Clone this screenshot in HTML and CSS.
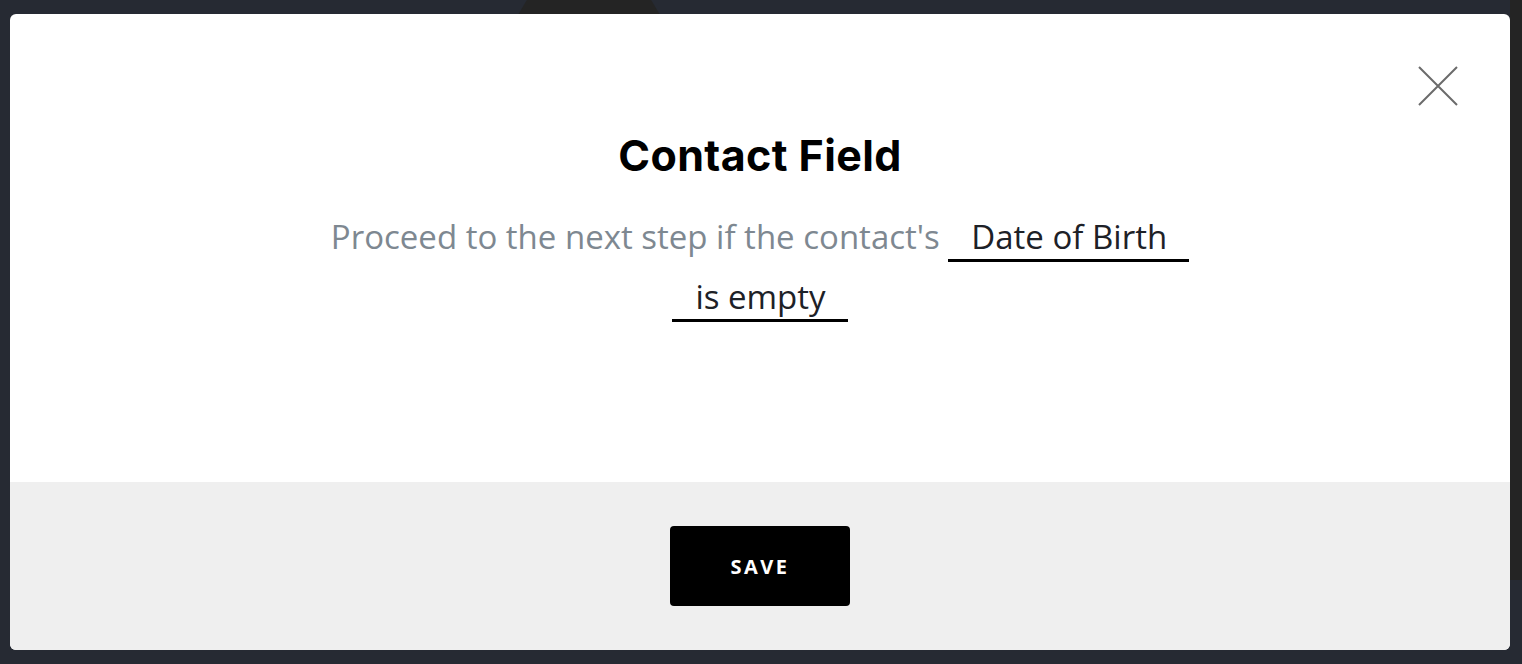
FILE: index.html
```html
<!DOCTYPE html>
<html lang="en">
<head>
<meta charset="utf-8">
<title>Contact Field</title>
<link rel="stylesheet" href="styles.css">
</head>
<body>
<div class="backdrop-shape shape-top"></div>
<div class="backdrop-shape shape-right"></div>
<div class="modal">
  <div class="modal-body">
    <button class="close" aria-label="Close">
      <svg width="40" height="40" viewBox="0 0 40 40"><path d="M1 1L39 39M39 1L1 39" stroke="#6b6b6b" stroke-width="2" fill="none"/></svg>
    </button>
    <h1 class="title">Contact Field</h1>
    <p class="sentence">Proceed to the next step if the contact's <span class="choice">Date of Birth</span> <span class="choice">is empty</span></p>
  </div>
  <div class="modal-footer">
    <button class="save">SAVE</button>
  </div>
</div>
</body>
</html>
```
FILE: styles.css
```css
html, body {
  margin: 0;
  height: 100%;
}
body {
  background: #262a33;
  padding: 14px 12px 14px 10px;
  box-sizing: border-box;
  overflow: hidden;
  position: relative;
}
.backdrop-shape {
  position: absolute;
  background: #242424;
}
.shape-top {
  left: 515px;
  top: 0;
  width: 148px;
  height: 20px;
  clip-path: polygon(8% 0, 92% 0, 100% 100%, 0 100%);
}
.shape-right {
  right: 0;
  top: 0;
  width: 12px;
  height: 580px;
}
.modal {
  position: relative;
  height: 636px;
  background: #fff;
  border-radius: 6px;
  overflow: hidden;
  display: flex;
  flex-direction: column;
}
.modal-body {
  position: relative;
  height: 468px;
  box-sizing: border-box;
  padding-top: 117px;
  text-align: center;
}
.close {
  position: absolute;
  top: 52px;
  right: 52px;
  width: 40px;
  height: 40px;
  padding: 0;
  border: 0;
  background: none;
  cursor: pointer;
}
.close svg { display: block; }
.title {
  margin: 0;
  font-family: Inter, "Noto Sans", sans-serif;
  font-weight: 700;
  font-size: 43px;
  line-height: 48px;
  letter-spacing: 0.4px;
  color: #000;
}
.sentence {
  margin: 28px auto 0;
  width: 900px;
  font-family: "Open Sans", "Noto Sans", sans-serif;
  font-size: 33px;
  line-height: 60px;
  color: #7e8891;
}
.choice {
  display: inline-block;
  line-height: 44px;
  padding: 0 22px 0 23px;
  border-bottom: 3px solid #000;
  color: #1d2127;
}
.modal-footer {
  flex: 1;
  background: #efefef;
  display: flex;
  align-items: center;
  justify-content: center;
}
.save {
  width: 180px;
  height: 80px;
  background: #000;
  color: #fff;
  border: 0;
  border-radius: 4px;
  font-family: "Open Sans", "Noto Sans", sans-serif;
  font-weight: 700;
  font-size: 20px;
  letter-spacing: 2.5px;
  cursor: pointer;
}
```
